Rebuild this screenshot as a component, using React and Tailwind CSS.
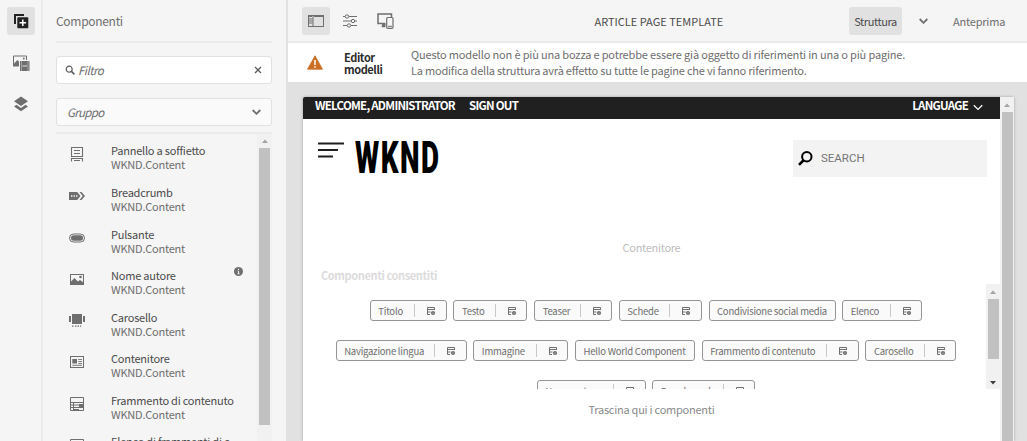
import React from "react";

const sans = "font-['Noto_Sans_CJK_SC','Noto_Sans',sans-serif]";

const Svg = ({ w, h, className = "", children }) => (
  <svg width={w} height={h} viewBox={`0 0 ${w} ${h}`} className={`block shrink-0 ${className}`} fill="none">
    {children}
  </svg>
);

const Chevron = ({ w = 9, h = 6, sw = 1.8, className = "" }) => (
  <svg width={w} height={h} viewBox="0 0 9 6" className={`block shrink-0 ${className}`} fill="none" stroke="currentColor" strokeWidth={sw}>
    <path d="M.7 1 4.5 4.8 8.3 1" />
  </svg>
);

const Triangle = ({ down = false, className = "" }) => (
  <svg width="6" height="4" viewBox="0 0 6 4" className={`block shrink-0 ${className}`} fill="currentColor">
    <path d={down ? "M0 0h6L3 3.6z" : "M0 4h6L3 .4z"} />
  </svg>
);

const icons = {
  accordion: (
    <Svg w={16} h={16} className="-mt-[0.5px]">
      <path d="M2.500 1.500h11v9h-11zM5 4.500h6M5 7.500h6M2.500 15.500v-3h11v3M5 14.500h6" stroke="#6e6e6e" strokeWidth="1.100" />
    </Svg>
  ),
  breadcrumb: (
    <Svg w={16} h={16}>
      <path d="M0 4h8.200l3.300 4-3.300 4H0z" fill="#6e6e6e" />
      <path d="M10.500 4h2l3.500 4-3.500 4h-2L13.700 8z" fill="#6e6e6e" />
      <path d="M2 7.300h1.400v1.400H2zM4.500 7.300h1.400v1.400H4.500zM7 7.300h1.400v1.400H7z" fill="#f5f5f5" />
    </Svg>
  ),
  button: (
    <Svg w={16} h={16}>
      <rect x=".5" y="4" width="15" height="8" rx="4" stroke="#6e6e6e" />
      <rect x="2" y="5.300" width="12" height="5.400" rx="2.600" fill="#6e6e6e" />
    </Svg>
  ),
  image: (
    <Svg w={16} h={16}>
      <rect x="1.500" y="3.500" width="13" height="10" stroke="#6e6e6e" />
      <path d="M1.500 11 5.500 7l3.300 3.500L11 9l3.500 2.500v2h-13z" fill="#6e6e6e" />
      <circle cx="11.500" cy="6" r="1.300" fill="#6e6e6e" />
    </Svg>
  ),
  carousel: (
    <Svg w={16} h={16}>
      <path d="M3 1h10v10H3zM0 3h2v6H0zM14 3h2v6h-2zM3 12.500h1.500v1.300H3zM6 12.500h1.500v1.300H6zM8.500 12.500H10v1.300H8.500zM11 12.500h1.200v1.300H11z" fill="#6e6e6e" />
    </Svg>
  ),
  container: (
    <Svg w={16} h={16}>
      <rect x="1.500" y="2.500" width="13" height="11" stroke="#6e6e6e" />
      <path d="M3.300 5h4.700v4.500H3.300z" fill="#6e6e6e" />
      <path d="M9.300 5.500h3.700M9.300 7.500h3.700M9.300 9.500h3.700M3.300 11.300h9.700" stroke="#6e6e6e" strokeWidth=".9" />
    </Svg>
  ),
  fragment: (
    <Svg w={16} h={16}>
      <path d="M1.500 1.500h13v13h-13zM1.500 6.500h13M1.500 11.500h13M4.500 6.500v8M1.500 9h9" stroke="#6e6e6e" />
      <path d="M10 8h4.500v3H10zM5 13h5v1.500H5z" fill="#6e6e6e" />
    </Svg>
  ),
};

const components = [
  ["accordion", "Pannello a soffietto"],
  ["breadcrumb", "Breadcrumb"],
  ["button", "Pulsante"],
  ["image", "Nome autore"],
  ["carousel", "Carosello"],
  ["container", "Contenitore"],
  ["fragment", "Frammento di contenuto"],
  ["fragment", "Elenco di frammenti di c"],
];

function Rail() {
  return (
    <nav className="flex w-[43px] shrink-0 flex-col items-center border-r-2 border-[#ebebeb] pt-[7px]">
      <div className="flex h-7 w-7 items-center justify-center rounded-[3px] bg-[#e1e1e1]">
        <Svg w={16} h={16}>
          <path d="M1 1h10v2H3v8H1z" fill="#222" />
          <rect x="4.300" y="4.300" width="11" height="11" rx=".8" fill="#222" />
          <path d="M9.800 6.500v6.600M6.500 9.800h6.600" stroke="#fff" strokeWidth="1.500" />
        </Svg>
      </div>
      <div className="mt-[20px] flex h-4 w-4">
        <Svg w={17} h={17}>
          <path d="M.5 11.500V1h13v4" stroke="#6e6e6e" />
          <path d="M1 8.500 4.500 5 6 6.500V11.500H1z" fill="#6e6e6e" />
          <circle cx="10.800" cy="3.500" r="1" fill="#6e6e6e" />
          <rect x="7" y="6" width="9.500" height="10" fill="#6e6e6e" />
          <path d="M8.500 6.500v9M15 6.500v9" stroke="#f5f5f5" strokeWidth=".8" strokeDasharray="1 1" />
          <path d="M9.500 11h4.500" stroke="#f5f5f5" strokeWidth=".9" />
        </Svg>
      </div>
      <div className="mt-[25px] flex">
        <Svg w={16} h={16}>
          <path d="M8 .5 15 5.300 8 10.100 1 5.300z" fill="#6e6e6e" />
          <path d="m3.500 8.700L1 10.500l7 4.800 7-4.800-2.500-1.800L8 11.900z" fill="#6e6e6e" />
        </Svg>
      </div>
    </nav>
  );
}

function Sidebar() {
  return (
    <aside className="flex w-[245px] shrink-0 flex-col border-r-2 border-[#e1e1e1] pl-[13px] pr-[14px]">
      <div className="flex h-[43px] shrink-0 items-center border-b-2 border-[#ebebeb] text-[12px] leading-4 tracking-[-0.3px] text-[#707070]">Componenti</div>
      <div className="mt-[13px] flex h-7 shrink-0 items-center rounded-[3px] border border-[#e1e1e1] bg-white pl-2 pr-[9px]">
        <Svg w={10} h={10}>
          <circle cx="4.200" cy="4.200" r="3" stroke="#5a5a5a" strokeWidth="1.200" />
          <path d="m6.400 6.400 3 3" stroke="#5a5a5a" strokeWidth="1.500" />
        </Svg>
        <span className="ml-[3px] grow text-[11.500px] italic leading-4 tracking-[-0.55px] text-[#6e6e6e]">Filtro</span>
        <Svg w={8} h={8}>
          <path d="m1 1 6 6M7 1 1 7" stroke="#5a5a5a" strokeWidth="1.300" />
        </Svg>
      </div>
      <div className="mt-3.5 flex h-7 shrink-0 items-center rounded-[3px] border border-[#e1e1e1] bg-[#fafafa] pl-2.5 pr-2.5">
        <span className="grow text-[11.500px] italic leading-4 tracking-[-0.7px] text-[#6e6e6e]">Gruppo</span>
        <Chevron className="text-[#6e6e6e]" />
      </div>
      <div className="mt-1.5 flex min-h-0 grow border-t-2 border-[#ebebeb]">
        <ul className="h-[307px] grow overflow-hidden pt-[10.5px]">
          {components.map(([icon, name], i) => (
            <li key={name} className="flex h-[41.6px]">
              <span className="w-[55px] pl-[13px] pt-[2px]">{icons[icon]}</span>
              <span className="-mt-[1.200px] w-[123px] whitespace-nowrap text-[11px] leading-[14px] tracking-[-0.22px]">
                <span className="block text-[#4b4b4b]">{name}</span>
                <span className="block text-[#6e6e6e]">WKND.Content</span>
              </span>
              {i === 3 && (
                <Svg w={9} h={9} className="-mt-[2px]">
                  <circle cx="4.500" cy="4.500" r="4.500" fill="#6e6e6e" />
                  <path d="M4.500 1.700v1.300M3.600 4.200h1v2.500M3.500 6.800h2" stroke="#f5f5f5" strokeWidth="1" />
                </Svg>
              )}
            </li>
          ))}
        </ul>
        <div className="flex w-[15px] shrink-0 flex-col items-center bg-[#f1f1f1]">
          <Triangle className="my-[5px] text-[#a3a3a3]" />
          <div className="h-[277px] w-[11px] bg-[#c1c1c1]" />
        </div>
      </div>
    </aside>
  );
}

function Toolbar() {
  return (
    <header className="flex h-[43px] shrink-0 items-center border-b-2 border-[#ebebeb] pl-3.5 text-[11px] leading-4">
      <div className="flex h-7 w-7 items-center justify-center rounded-[3px] bg-[#e1e1e1]">
        <Svg w={16} h={14}>
          <rect x=".5" y="1.500" width="15" height="11" stroke="#6e6e6e" />
          <path d="M0 1h16v2H0zM4.500 2v10h1V2z" fill="#6e6e6e" />
          <path d="M1 5h3.500M1 7h3.500M1 9h3.500" stroke="#6e6e6e" />
        </Svg>
      </div>
      <Svg w={15} h={14} className="ml-[13px]">
        <path d="M0 2.500h2M6 2.500h8M0 7h8M12 7h2M0 11.500h4M8 11.500h6" stroke="#6e6e6e" />
        <circle cx="4" cy="2.500" r="1.700" stroke="#6e6e6e" />
        <circle cx="10" cy="7" r="1.700" stroke="#6e6e6e" />
        <circle cx="6" cy="11.500" r="1.700" stroke="#6e6e6e" />
      </Svg>
      <Svg w={17} h={16} className="ml-[19px]">
        <path d="M8 10.500H1V1h13.500v3M5 13.500h3" stroke="#6e6e6e" strokeWidth="1.500" />
        <path d="M5.500 10h3v4h-4z" fill="#6e6e6e" />
        <rect x="9.700" y="4.500" width="6.300" height="10.800" rx="1" fill="#f5f5f5" stroke="#6e6e6e" strokeWidth="1.200" />
        <path d="M11 13.300h4" stroke="#6e6e6e" />
      </Svg>
      <div className="ml-[200.5px] w-[254.500px] whitespace-nowrap text-[#4b4b4b]">ARTICLE PAGE TEMPLATE</div>
      <div className="flex h-7 w-[53px] shrink-0 items-center justify-center rounded-[3px] bg-[#e1e1e1] tracking-[-0.4px] text-[#4b4b4b]">Struttura</div>
      <Chevron className="ml-[17px] text-[#6e6e6e]" />
      <span className="ml-[25px] tracking-[-0.2px] text-[#6e6e6e]">Anteprima</span>
    </header>
  );
}

function Alert() {
  return (
    <div className="flex h-[39px] shrink-0 items-center bg-white pl-[19px]">
      <Svg w={16} h={15}>
        <path d="M8 .8 15.500 14.200H.5z" fill="#cb6f24" stroke="#cb6f24" strokeLinejoin="round" strokeWidth=".8" />
        <path d="M8 5v5M8 11.200v1.600" stroke="#fff" strokeWidth="1.500" />
      </Svg>
      <div className="ml-[21px] w-[67px] text-[11px] font-bold leading-3 tracking-[-0.4px] text-[#2c2c2c]">
        Editor
        <br />
        modelli
      </div>
      <div className="whitespace-nowrap text-[11px] leading-[15.500px] tracking-[-0.17px] text-[#6e6e6e]">
        Questo modello non è più una bozza e potrebbe essere già oggetto di riferimenti in una o più pagine.
        <br />
        <span className="tracking-[-0.21px]">La modifica della struttura avrà effetto su tutte le pagine che vi fanno riferimento.</span>
      </div>
    </div>
  );
}

const PolicyIcon = () => (
  <Svg w={10} h={10}>
    <path d="M4 8.500H1.500v-7h7V4M1.500 3.500h7M1.500 6h3" stroke="#6e6e6e" />
    <circle cx="7" cy="7" r="2.100" fill="#6e6e6e" />
    <circle cx="7" cy="7" r=".5" fill="#fafafa" />
  </Svg>
);

const Tag = ({ width, label, plain }) => (
  <div className={`flex h-[21px] shrink-0 items-center rounded-[3px] border border-[#959595] bg-[#fafafa] pl-[7.500px] ${width}`}>
    <span className="grow whitespace-nowrap text-[9.500px] leading-[14px] tracking-[-0.22px] text-[#6e6e6e]">{label}</span>
    {!plain && (
      <span className="flex h-[13px] w-[31.500px] shrink-0 items-center border-l border-[#c8c8c8] pl-[11px]">
        <PolicyIcon />
      </span>
    )}
  </div>
);

function Page() {
  return (
    <div className="flex min-h-0 grow bg-[#e1e1e1] pl-[15px] pt-[15px]">
      <div className="flex w-[711px] rounded-t-[2px] bg-white shadow-[0_0_3px_rgba(0,0,0,0.3)]">
        <div className="flex w-[697px] flex-col">
          <div className="flex h-[22px] shrink-0 items-center rounded-tl-[2px] bg-[#202020] pb-[6px] pl-3 pr-[17px] text-[11.500px] font-bold leading-4 tracking-[-0.75px] text-white">
            <span className="w-[154px] whitespace-nowrap">WELCOME, ADMINISTRATOR</span>
            <span className="grow">SIGN OUT</span>
            <span>LANGUAGE</span>
            <Chevron w={10} h={7} sw={1.1} className="ml-[5px] mt-1" />
          </div>
          <div className="flex h-[119px] shrink-0 items-start pl-[15px] pr-[13px] pt-[21px]">
            <Svg w={26} h={18} className="mt-0.5">
              <path d="M0 1.500h26M0 8h20M0 14.500h15" stroke="#202020" strokeWidth="2" />
            </Svg>
            <div className="ml-[10.500px] mt-[3px] h-8 w-[84.500px]">
              <div className="w-max origin-left scale-x-[0.64] font-[Roboto] text-[43.500px] font-black leading-8 tracking-[2.300px] text-black">WKND</div>
            </div>
            <div className="ml-auto flex h-[37px] w-[194px] items-center bg-[#f3f3f3] pl-[5px]">
              <Svg w={15} h={15}>
                <circle cx="8.800" cy="5.800" r="4.700" stroke="#000" strokeWidth="2" />
                <path d="M5.300 9.500 1 13.800" stroke="#000" strokeWidth="2.500" />
              </Svg>
              <span className="ml-2 font-[Roboto] text-[11.500px] text-[#757575]">SEARCH</span>
            </div>
          </div>
          <div className="h-[28px] shrink-0 pt-px text-center text-[11px] leading-4 tracking-[-0.3px] text-[#bdbdbd]">Contenitore</div>
          <div className="h-[18px] shrink-0 pl-[18px] pt-px text-[11px] font-bold leading-4 tracking-[-0.38px] text-[#dcdcdc]">Componenti consentiti</div>
          <div className="flex h-[105px] shrink-0">
            <div className="flex w-[683px] flex-col gap-[19px] overflow-hidden pl-[3px] pt-4">
              <div className="flex justify-center gap-[6.700px]">
                <Tag width="w-[77px]" label="Titolo" />
                <Tag width="w-[74px]" label="Testo" />
                <Tag width="w-[78px]" label="Teaser" />
                <Tag width="w-[83px]" label="Schede" />
                <Tag width="w-[127px]" label="Condivisione social media" plain />
                <Tag width="w-[80px]" label="Elenco" />
              </div>
              <div className="flex justify-center gap-[6.700px]">
                <Tag width="w-[131px]" label="Navigazione lingua" />
                <Tag width="w-[95px]" label="Immagine" />
                <Tag width="w-[120px]" label="Hello World Component" plain />
                <Tag width="w-[157px]" label="Frammento di contenuto" />
                <Tag width="w-[91px]" label="Carosello" />
              </div>
              <div className="flex justify-center gap-[6.700px]">
                <Tag width="w-[109px]" label="Nome autore" />
                <Tag width="w-[103px]" label="Breadcrumb" />
              </div>
            </div>
            <div className="flex w-3.5 flex-col items-center bg-[#f1f1f1]">
              <Triangle className="my-[5.500px] text-[#a3a3a3]" />
              <div className="h-[60px] w-[11px] bg-[#c1c1c1]" />
              <Triangle down className="mb-1 mt-auto text-[#404040]" />
            </div>
          </div>
          <div className="pt-3 text-center text-[11px] leading-4 tracking-[-0.25px] text-[#8a8a8a]">Trascina qui i componenti</div>
        </div>
        <div className="flex w-3.5 flex-col items-center bg-[#f1f1f1]">
          <Triangle className="my-[5.500px] text-[#a3a3a3]" />
          <div className="w-[11px] grow bg-[#c1c1c1]" />
        </div>
      </div>
    </div>
  );
}

export default function App() {
  return (
    <div className={`flex h-[441px] w-[1027px] overflow-hidden bg-[#f5f5f5] ${sans}`}>
      <Rail />
      <Sidebar />
      <main className="flex min-w-0 grow flex-col">
        <Toolbar />
        <Alert />
        <Page />
      </main>
    </div>
  );
}
